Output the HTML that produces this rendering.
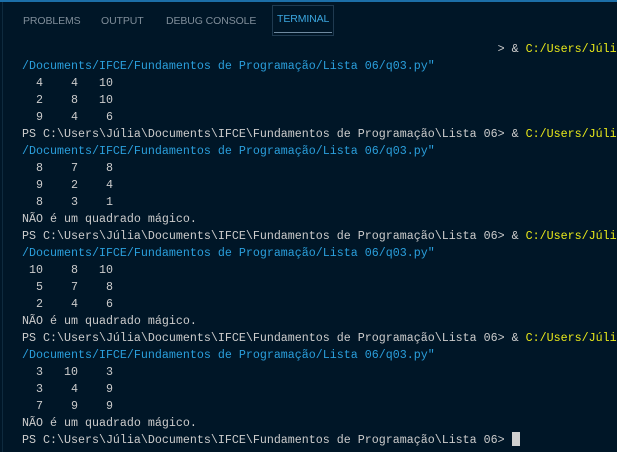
<!DOCTYPE html>
<html><head><meta charset="utf-8"><style>
html,body{margin:0;padding:0}
body{width:617px;height:452px;background:#001627;overflow:hidden;position:relative;font-family:"Liberation Sans",sans-serif}
.topline{position:absolute;left:0;top:0;width:617px;height:2px;background:#1c6fa8}
.leftline{position:absolute;left:2px;top:2px;width:1px;height:450px;background:#0e2a3e}
.tab{position:absolute;top:15px;font-size:10.5px;color:#7f8d99;letter-spacing:-0.1px}
.active{color:#3ba7e0;border:1px solid #1f3a50;padding:3px 4px 6px 4px;top:5px;height:20px;line-height:20px;left:272px}
.active:after{content:"";position:absolute;left:1px;right:1px;bottom:2px;height:1px;background:#6f8aa0}
pre{position:absolute;left:22px;top:41px;margin:0;font-family:"Liberation Mono",monospace;font-size:11.67px;line-height:17px;color:#cccccc;white-space:pre}
.b{color:#2a9fdc}.y{color:#e8e81a}
.cur{display:inline-block;width:8px;height:14px;background:#d0d0d0;vertical-align:-3px}
</style></head><body>
<div class="topline"></div><div class="leftline"></div>
<div class="tab" style="left:23px">PROBLEMS</div>
<div class="tab" style="left:101px">OUTPUT</div>
<div class="tab" style="left:166px">DEBUG CONSOLE</div>
<div class="tab active">TERMINAL</div>
<pre>                                                                    &gt; &amp; <span class="y">C:/Users/Júlia</span>
<span class="b">/Documents/IFCE/Fundamentos de Programação/Lista 06/q03.py"</span>
  4    4   10
  2    8   10
  9    4    6
PS C:\Users\Júlia\Documents\IFCE\Fundamentos de Programação\Lista 06&gt; &amp; <span class="y">C:/Users/Júlia</span>
<span class="b">/Documents/IFCE/Fundamentos de Programação/Lista 06/q03.py"</span>
  8    7    8
  9    2    4
  8    3    1
NÃO é um quadrado mágico.
PS C:\Users\Júlia\Documents\IFCE\Fundamentos de Programação\Lista 06&gt; &amp; <span class="y">C:/Users/Júlia</span>
<span class="b">/Documents/IFCE/Fundamentos de Programação/Lista 06/q03.py"</span>
 10    8   10
  5    7    8
  2    4    6
NÃO é um quadrado mágico.
PS C:\Users\Júlia\Documents\IFCE\Fundamentos de Programação\Lista 06&gt; &amp; <span class="y">C:/Users/Júlia</span>
<span class="b">/Documents/IFCE/Fundamentos de Programação/Lista 06/q03.py"</span>
  3   10    3
  3    4    9
  7    9    9
NÃO é um quadrado mágico.
PS C:\Users\Júlia\Documents\IFCE\Fundamentos de Programação\Lista 06&gt; <span class="cur"></span></pre>
</body></html>
